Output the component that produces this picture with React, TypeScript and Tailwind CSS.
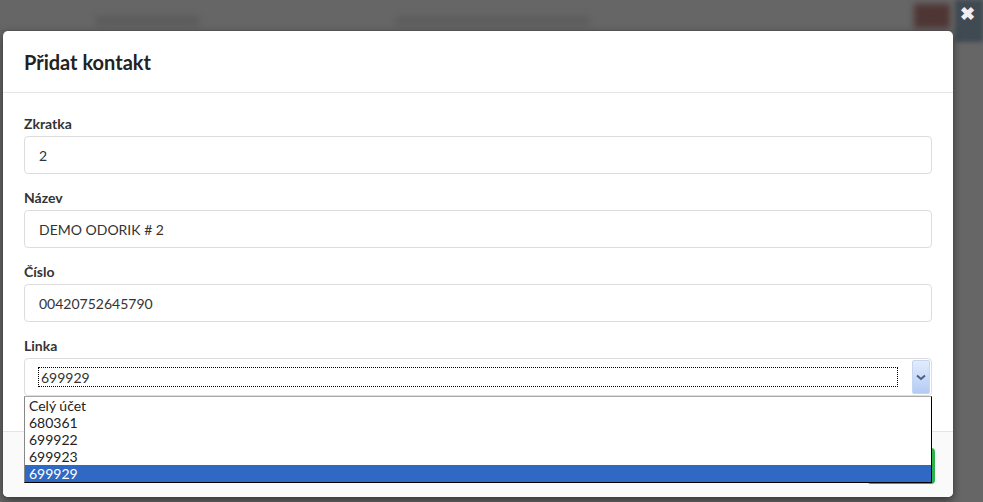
import React from "react";

const fields = [
    { label: "Zkratka", value: "2" },
    { label: "Název", value: "DEMO ODORIK # 2" },
    { label: "Číslo", value: "00420752645790" },
];

const options = ["Celý účet", "680361", "699922", "699923", "699929"];

function Field({ label, value }: { label: string; value: string }) {
    return (
        <div className="flex flex-col mb-[14px]">
            <div className="h-[20px] leading-[20px] text-[14px] font-bold text-[#333] mb-[2px]">{label}</div>
            <div className="h-[38px] border border-[#ddd] rounded-[4px] px-[14px] flex items-center text-[14px] text-[#333]">
                {value}
            </div>
        </div>
    );
}

export default function App() {
    const selected = "699929";

    return (
        <div className="w-[983px] h-[502px] bg-[#666] overflow-hidden relative font-['Lato','Open_Sans',sans-serif]">
            {/* blurred page behind the backdrop */}
            <div className="h-[31px] flex items-end relative border-b border-[#5e5e5e]">
                <div className="ml-[95px] mb-[4px] w-[105px] h-[10px] bg-[#5c5c5c] rounded blur-[3px]" />
                <div className="ml-[195px] mb-[4px] w-[195px] h-[10px] bg-[#5d5d5d] rounded blur-[3px]" />
                <div className="ml-auto w-[36px] h-[24px] mr-[33px] mb-[2px] bg-[#4e3634] blur-[3px]" />
                <div className="absolute right-0 top-0 w-[28px] h-[42px] bg-[#3f4a52] blur-[2px]" />
                <div className="absolute right-[8px] top-[3px] text-[18px] leading-[20px] font-bold text-[#eee]">✖</div>
            </div>

            <div className="ml-[3px] w-[950px] h-[466px] bg-white rounded-[5px] shadow-[0_3px_9px_rgba(0,0,0,0.5)] flex flex-col relative">
                <div className="h-[62px] border-b border-[#e5e5e5] px-[21px] flex items-center">
                    <h4 className="text-[20px] font-bold text-[#222]">Přidat kontakt</h4>
                </div>

                <div className="px-[21px] pt-[21px] flex-1">
                    {fields.map((f) => (
                        <Field key={f.label} label={f.label} value={f.value} />
                    ))}
                    <div className="flex flex-col relative">
                        <div className="h-[20px] leading-[20px] text-[14px] font-bold text-[#333] mb-[2px]">Linka</div>
                        <div className="h-[38px] border border-[#ddd] rounded-[4px] flex items-center pl-[13px] pr-[1px]">
                            <div className="flex-1 h-[20px] border border-dotted border-black flex items-center pl-[2px] text-[14px] text-[#333]">
                                {selected}
                            </div>
                            <div className="ml-[14px] w-[18px] h-[34px] rounded-[2px] border border-[#c3d5f3] bg-gradient-to-b from-[#e3ecfc] to-[#b4cbf4] flex items-center justify-center">
                                <svg width="10" height="7" viewBox="0 0 10 7">
                                    <path d="M1 1.5 L5 5 L9 1.5" fill="none" stroke="#4d5f85" strokeWidth="2" />
                                </svg>
                            </div>
                        </div>
                        <div className="absolute left-0 top-[60px] w-[908px] border border-black border-l-[#888] border-t-[#aaa] bg-white z-10">
                            {options.map((o) => (
                                <div
                                    key={o}
                                    className={
                                        o === selected
                                            ? "h-[17px] leading-[17px] pl-[4px] text-[14px] bg-[#3069c4] text-white"
                                            : "h-[17px] leading-[17px] pl-[4px] text-[14px] text-[#222]"
                                    }
                                >
                                    {o}
                                </div>
                            ))}
                        </div>
                    </div>
                </div>

                <div className="h-[66px] border-t border-[#e5e5e5] bg-[#fafafa] rounded-b-[5px] flex items-start justify-end pr-[18px] pt-[16px]">
                    <button className="h-[36px] px-[16px] rounded-[4px] bg-[#2bb24c] text-white text-[14px]">Uložit</button>
                </div>
            </div>
        </div>
    );
}
